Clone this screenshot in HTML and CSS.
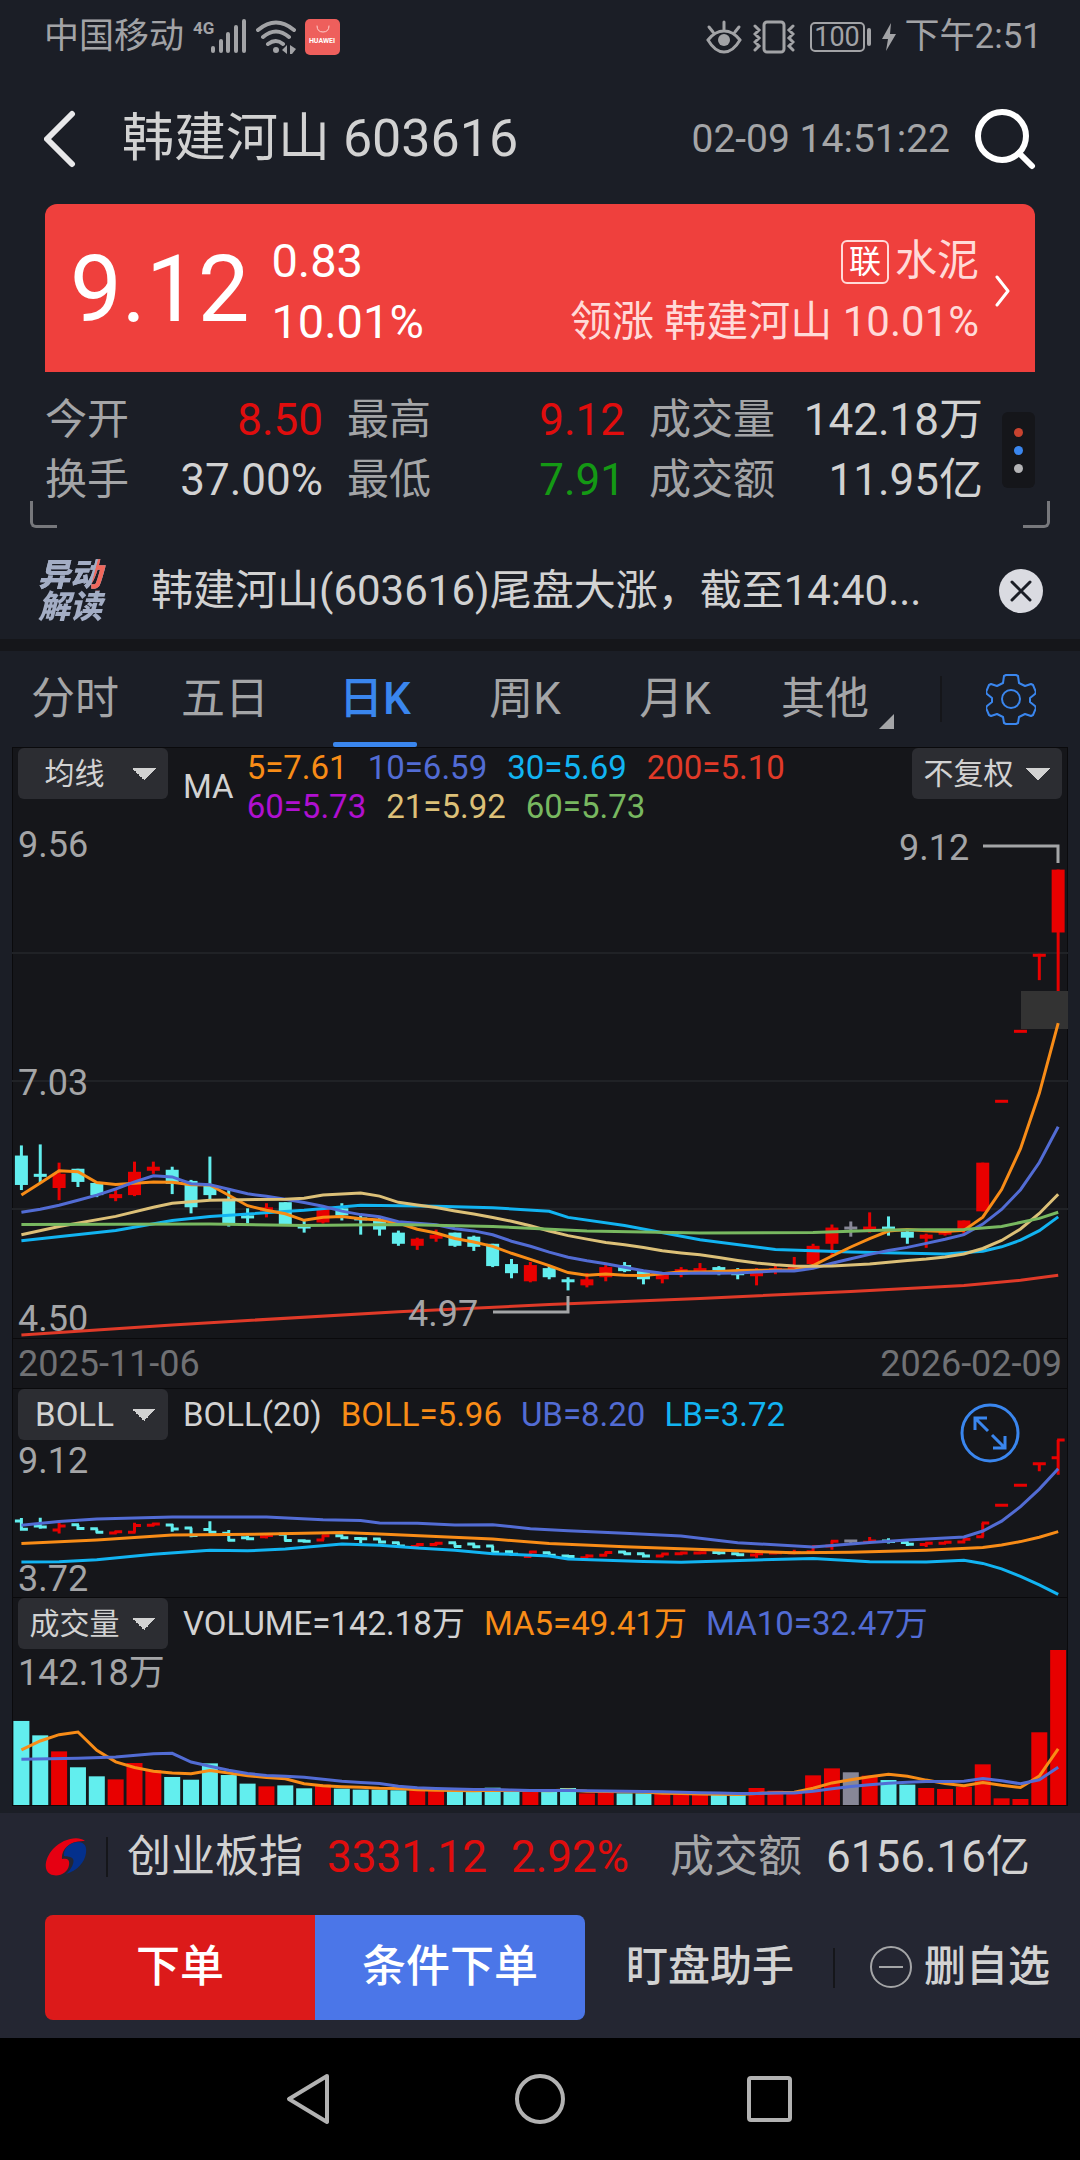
FILE: index.html
```html
<!DOCTYPE html>
<html lang="zh-CN">
<head>
    <meta charset="UTF-8">
    <meta name="viewport" content="width=device-width, initial-scale=1.0">
    <title>韩建河山 603616</title>
    <link rel="stylesheet" href="styles.css">
</head>
<body>
    <div class="status-bar">
        <span>中国移动</span>
        <svg class="signal" width="54" height="36" viewBox="0 0 54 36">
            <text class="network" x="0" y="15">4G</text>
            <path d="M20 29v3M28 22v10M35 15v17M43 8v24M51 2v30" />
        </svg>
        <svg class="wifi" width="40" height="36" viewBox="0 0 40 36">
            <path d="M2 11q18-15 36 0M7 18q13-11 26 0M12 25q8-6 15 0" />
            <circle cx="20" cy="31" r="3" />
            <path class="solid" d="M31 26v9l-5-4zM34 26l6 4-4 5h-2z" />
        </svg>
        <svg width="35" height="36" viewBox="0 0 35 36">
            <rect width="35" height="36" rx="5" fill="#ee5f5c" />
            <path class="handle" d="M12 7q0 6 6 6t6-6" />
            <text class="huawei" x="17" y="24">HUAWEI</text>
        </svg>
        <div class="status-right">
            <svg width="36" height="36" viewBox="0 0 36 36">
                <path d="M2 21q7-9 16-9t16 9q-7 12-16 12T2 21zM18 11V3M7 13L3 8M29 13l4-5" />
                <circle cx="18" cy="21" r="6" />
            </svg>
            <svg width="42" height="36" viewBox="0 0 42 36">
                <rect x="11" y="3" width="20" height="30" rx="3" />
                <path d="M2 7l4 4-4 4 4 4-4 4 4 4-4 4M40 7l-4 4 4 4-4 4 4 4-4 4 4 4" />
            </svg>
            <div class="battery">100</div>
            <svg width="14" height="28" viewBox="0 0 14 28"><path class="solid" d="M9 0L0 16h6L4 28l10-17H8z" /></svg>
            <span>下午2:51</span>
        </div>
    </div>

    <header class="title-bar">
        <button class="icon-button" aria-label="返回">
            <svg width="32" height="58" viewBox="0 0 32 58"><path d="M28 4L3 29l25 25" fill="none" stroke="#e8e8ea" stroke-width="6" stroke-linecap="round" stroke-linejoin="round" /></svg>
        </button>
        <h1>韩建河山 603616</h1>
        <time>02-09 14:51:22</time>
        <button class="icon-button" aria-label="搜索">
            <svg width="62" height="62" viewBox="0 0 62 62"><g fill="none" stroke="#fff" stroke-width="6" stroke-linecap="round"><circle cx="28" cy="28" r="24" /><path d="M45 45l13 13" /></g></svg>
        </button>
    </header>

    <a class="quote" href="#sector">
        <strong class="price">9.12</strong>
        <span class="change">0.83<br>10.01%</span>
        <span class="sector"><span class="sector-name"><b>联</b>水泥</span><br>领涨 韩建河山 10.01%</span>
        <svg width="16" height="32" viewBox="0 0 16 32"><path d="M2 2l11 14L2 30" fill="none" stroke="#fff" stroke-width="3" stroke-linecap="round" stroke-linejoin="round" /></svg>
    </a>

    <section class="stats">
        <dl>
            <div><dt>今开</dt><dd class="up">8.50</dd></div>
            <div><dt>最高</dt><dd class="up">9.12</dd></div>
            <div><dt>成交量</dt><dd>142.18万</dd></div>
            <div><dt>换手</dt><dd>37.00%</dd></div>
            <div><dt>最低</dt><dd class="down">7.91</dd></div>
            <div><dt>成交额</dt><dd>11.95亿</dd></div>
        </dl>
        <button class="more" aria-label="更多"><i></i><i></i><i></i></button>
    </section>

    <section class="news">
        <div class="news-logo">异动<br>解读</div>
        <a href="#news">韩建河山(603616)尾盘大涨，截至14:40...</a>
        <button class="icon-button" aria-label="关闭">
            <svg width="46" height="46" viewBox="0 0 46 46"><circle cx="23" cy="23" r="22" fill="#dadbe1" /><path d="M14 14l18 18M32 14L14 32" stroke="#1b1e26" stroke-width="3" stroke-linecap="round" /></svg>
        </button>
    </section>

    <nav class="tabs">
        <button>分时</button>
        <button>五日</button>
        <button class="active">日K</button>
        <button>周K</button>
        <button>月K</button>
        <button class="has-menu">其他</button>
        <button class="settings" aria-label="设置">
            <svg width="50" height="52" viewBox="0 0 50 52">
                <g fill="none" stroke="#3a86ee" stroke-width="2" stroke-linejoin="round">
                    <path d="M20 2h10l2 1 1 7 6 3 6-2 2 1 3 7-1 2-5 4v4l5 4 1 2-3 7-2 1-6-2-6 3-1 6-2 1H20l-2-1-1-6-6-3-6 2-2-1-3-7 1-2 5-4v-4l-5-4-1-2 3-7 2-1 6 2 6-3 1-7z" />
                    <circle cx="25" cy="26" r="9" />
                </g>
            </svg>
        </button>
    </nav>

    <main class="charts">
        <section class="panel">
            <div class="panel-head main-head">
                <select aria-label="主图指标"><option>均线</option></select>
                <span class="ma-title">MA</span>
                <div class="ma-values">
                    <span class="orange">5=7.61</span><span class="blue">10=6.59</span><span class="cyan">30=5.69</span><span class="red">200=5.10</span><br>
                    <span class="purple">60=5.73</span><span class="yellow">21=5.92</span><span class="green">60=5.73</span>
                </div>
                <select aria-label="复权"><option>不复权</option></select>
            </div>
            <svg id="kline" viewBox="0 0 1056 513"></svg>
        </section>
        <div class="dates"><time>2025-11-06</time><time>2026-02-09</time></div>
        <section class="panel">
            <div class="panel-head">
                <select class="latin" aria-label="副图一"><option>BOLL</option></select>
                <span>BOLL(20)</span><span class="orange">BOLL=5.96</span><span class="blue">UB=8.20</span><span class="cyan">LB=3.72</span>
            </div>
            <svg id="boll" viewBox="0 0 1056 157"></svg>
            <button class="expand" aria-label="全屏">
                <svg width="60" height="60" viewBox="0 0 60 60"><g fill="none" stroke="#3a86ee" stroke-width="3"><circle cx="30" cy="30" r="28" /><path d="M28 28L15 15M15 27V15h12M32 32l13 13M45 33v12H33" /></g></svg>
            </button>
        </section>
        <section class="panel">
            <div class="panel-head">
                <select aria-label="副图二"><option>成交量</option></select>
                <span>VOLUME=142.18万</span><span class="orange">MA5=49.41万</span><span class="blue">MA10=32.47万</span>
            </div>
            <svg id="volume" viewBox="0 0 1056 156"></svg>
        </section>
    </main>

    <footer>
        <div class="index-row">
            <svg width="42" height="44" viewBox="0 0 42 44">
                <path d="M40 6C33 0 17 4 8 14C0 23-2 35 5 39c8 4 18-1 19-9c1-6-2-7-7-6c-1-8 6-19 23-18z" fill="#e60012" />
                <path d="M19 21c-1-9 8-14 14-14c7 0 9 5 8 11c-1 9-9 18-20 21c5-4 9-12 7-15c-2-3-6-2-9-3z" fill="#04308c" />
            </svg>
            <i class="divider"></i>
            <span class="index-name">创业板指</span>
            <span class="up">3331.12</span>
            <span class="up">2.92%</span>
            <span class="turnover">成交额</span>
            <span>6156.16亿</span>
        </div>
        <div class="actions">
            <button class="order">下单</button>
            <button class="condition">条件下单</button>
            <button class="plain">盯盘助手</button>
            <i class="divider"></i>
            <button class="plain remove">
                <svg width="44" height="44" viewBox="0 0 44 44"><g fill="none" stroke="#a4a5a7" stroke-width="2"><circle cx="22" cy="22" r="20" /><path d="M10 22h24" /></g></svg>
                删自选
            </button>
        </div>
    </footer>

    <nav class="system-nav">
        <button class="icon-button" aria-label="后退"><svg width="52" height="52" viewBox="0 0 52 52"><path d="M42 3L4 26l38 23z" /></svg></button>
        <button class="icon-button" aria-label="主页"><svg width="52" height="52" viewBox="0 0 52 52"><circle cx="26" cy="26" r="23" /></svg></button>
        <button class="icon-button" aria-label="最近任务"><svg width="52" height="52" viewBox="0 0 52 52"><rect x="6" y="5" width="41" height="42" rx="2" /></svg></button>
    </nav>

    <script src="chart.js"></script>
</body>
</html>
```
FILE: styles.css
```css
* {
    box-sizing: border-box;
}

body {
    margin: 0;
    background-color: #1b1e26;
    color: #d2d2d2;
    font-family: Roboto, "Noto Sans CJK SC", sans-serif;
    line-height: 1.2;
}

svg {
    display: block;
    flex: none;
}

button,
select {
    border: none;
    padding: 0;
    background: none;
    color: inherit;
    font-family: inherit;
    line-height: inherit;
}

a {
    color: inherit;
    text-decoration: none;
}

.icon-button {
    flex: none;
}

/* phone status bar */
.status-bar {
    display: flex;
    align-items: center;
    height: 74px;
    padding: 0 38px 0 44px;
    color: #a2a3a6;
    font-size: 35px;
    gap: 9px;
}

.status-bar path,
.status-bar rect[x] {
    fill: none;
    stroke: #a2a3a6;
    stroke-width: 3;
    stroke-linecap: round;
}

.status-bar .signal path,
.status-bar .wifi path {
    stroke-width: 4;
}

.status-bar .handle {
    stroke: #ffd0cc;
    stroke-width: 1;
}

.status-bar circle,
.status-bar .network,
.status-bar path.solid {
    fill: #a2a3a6;
    stroke: none;
}

.network {
    font-size: 17px;
    font-weight: bold;
}

.huawei {
    fill: #fff;
    font-size: 7px;
    font-weight: bold;
    text-anchor: middle;
}

.status-right {
    display: flex;
    align-items: center;
    margin-left: auto;
    gap: 11px;
}

.status-right span {
    margin-left: -2px;
}

.battery {
    position: relative;
    width: 55px;
    height: 30px;
    margin: 0 6px 0 4px;
    border: 2px solid #a2a3a6;
    border-radius: 5px;
    font-size: 27px;
    line-height: 27px;
    text-align: center;
}

.battery::after {
    content: "";
    position: absolute;
    top: 4px;
    right: -8px;
    width: 4px;
    height: 18px;
    border-radius: 2px;
    background-color: #a2a3a6;
}

/* stock title */
.title-bar {
    display: flex;
    align-items: center;
    height: 130px;
    padding: 0 44px;
}

.title-bar h1 {
    flex: 1;
    margin: 0 0 0 46px;
    font-size: 52px;
    font-weight: normal;
}

.title-bar time {
    margin-right: 24px;
    color: #a4a5a7;
    font-size: 39px;
}

/* price banner */
.quote {
    display: flex;
    align-items: center;
    height: 168px;
    margin: 0 45px;
    padding: 5px 24px 0 25px;
    border-radius: 12px 12px 0 0;
    background-color: #ef403d;
    color: #fff;
}

.price {
    font-size: 92px;
    font-weight: normal;
}

.change {
    margin-left: 22px;
    font-size: 47px;
    line-height: 61px;
}

.sector {
    flex: 1;
    margin-right: 16px;
    color: #ffdad8;
    font-size: 42px;
    line-height: 61px;
    text-align: right;
}

.sector b {
    display: inline-block;
    width: 48px;
    margin-right: 6px;
    border: 2px solid #ffdad8;
    border-radius: 6px;
    color: #fff;
    font-size: 32px;
    font-weight: normal;
    line-height: 40px;
    text-align: center;
    vertical-align: 2px;
}

.up {
    color: #e00d0d;
}

.down {
    color: #149914;
}

.stats {
    position: relative;
    display: flex;
    align-items: center;
    padding: 18px 45px 28px;
    gap: 19px;
}

.stats dl {
    flex: 1;
    display: grid;
    grid-template-columns: 278fr 278fr 334fr;
    column-gap: 24px;
    margin: 0;
    font-size: 44px;
    line-height: 60px;
}

.stats dl div {
    display: flex;
    justify-content: space-between;
}

.stats dt {
    color: #a4a5a7;
    font-size: 42px;
}

.stats dd {
    margin: 0;
}

.stats::before,
.stats::after {
    content: "";
    position: absolute;
    bottom: 10px;
    width: 24px;
    height: 24px;
    border-bottom: 3px solid #77787c;
}

.stats::before {
    left: 30px;
    border-left: 3px solid #77787c;
    border-bottom-left-radius: 6px;
}

.stats::after {
    right: 30px;
    border-right: 3px solid #77787c;
    border-bottom-right-radius: 6px;
}

.more {
    display: flex;
    flex-direction: column;
    align-items: center;
    justify-content: center;
    width: 33px;
    height: 76px;
    border-radius: 6px;
    background-color: #15161a;
    gap: 9px;
}

.more i {
    width: 9px;
    height: 9px;
    border-radius: 50%;
    background-color: #b4b4b6;
}

.more i:nth-child(1) {
    background-color: #c8432f;
}

.more i:nth-child(2) {
    background-color: #3a86ee;
}

/* news strip */
.news {
    display: flex;
    align-items: center;
    height: 113px;
    padding: 5px 36px 0 38px;
    border-bottom: 12px solid #15161a;
}

.news-logo {
    width: 113px;
    background: linear-gradient(105deg, #a3adc4 76%, #f0685c 77%, #f0685c 88%, #a3adc4 89%) 0 0 / 70px 32px no-repeat, #a3adc4;
    background-clip: text;
    -webkit-background-clip: text;
    color: transparent;
    font-size: 32px;
    font-style: italic;
    font-weight: 900;
    line-height: 32px;
}

.news a {
    flex: 1;
    min-width: 0;
    overflow: hidden;
    font-size: 42px;
    white-space: nowrap;
}

.tabs {
    display: grid;
    grid-template-columns: repeat(6, 1fr) 180px;
    height: 96px;
}

.tabs button {
    position: relative;
    color: #a4a5a7;
    font-size: 44px;
}

.tabs .active {
    color: #3a86ee;
    font-weight: 500;
}

.tabs .active::after {
    content: "";
    position: absolute;
    bottom: 0;
    left: calc(50% - 42px);
    width: 84px;
    height: 5px;
    border-radius: 2px;
    background-color: #3a86ee;
}

.has-menu::after {
    content: "";
    position: absolute;
    right: 6px;
    bottom: 18px;
    border-bottom: 15px solid #a4a5a7;
    border-left: 15px solid transparent;
}

.tabs .settings {
    display: flex;
    align-items: center;
    padding-left: 86px;
}

.settings::before {
    content: "";
    position: absolute;
    left: 40px;
    width: 2px;
    height: 46px;
    background-color: #15161a;
}

/* charts */
.charts {
    margin: 0 12px 7px;
    border: solid #0a0a0c;
    border-width: 0 1px 1px;
    background-color: #15161a;
}

.panel {
    position: relative;
    border-top: 1px solid #0a0a0c;
}

.panel > svg {
    width: calc(100% + 2px);
    margin: 0 -1px;
    overflow: visible;
}

.panel-head {
    display: flex;
    align-items: center;
    height: 51px;
    padding: 0 5px;
    font-size: 33px;
    gap: 19px;
    white-space: nowrap;
}

.panel-head select {
    appearance: none;
    width: 150px;
    height: 51px;
    margin-right: -4px;
    padding-right: 37px;
    border-radius: 6px;
    background-color: #2c2d32;
    background-image: linear-gradient(to top right, transparent 50%, #d2d2d2 50%), linear-gradient(to top left, transparent 50%, #d2d2d2 50%);
    background-position: 114px 20px, 126px 20px;
    background-repeat: no-repeat;
    background-size: 12px 12px;
    font-size: 30px;
    text-align: center;
    text-align-last: center;
}

.panel-head .latin {
    font-size: 33px;
}

.main-head {
    align-items: flex-start;
    height: 77px;
    line-height: 39px;
}

.main-head select:last-child {
    margin: 0 0 0 auto;
}

.ma-title {
    padding-top: 19px;
}

.ma-values {
    margin-left: -6px;
}

.ma-values span {
    margin-right: 20px;
}

.orange {
    color: #f88c17;
}

.blue {
    color: #526cd4;
}

.cyan {
    color: #12b4f2;
}

.red {
    color: #e03a28;
}

.purple {
    color: #b010d0;
}

.yellow {
    color: #dcc078;
}

.green {
    color: #78b860;
}

.dates {
    display: flex;
    align-items: center;
    justify-content: space-between;
    height: 50px;
    padding: 2px 5px 0;
    border-top: 1px solid #0a0a0c;
    color: #707174;
    font-size: 36px;
}

.expand {
    position: absolute;
    top: 14px;
    right: 47px;
}

.panel text {
    fill: #a4a5a7;
    font-size: 36px;
}

.grid {
    stroke: #202226;
    stroke-width: 2;
}

.leader {
    fill: none;
    stroke: #a4a5a7;
    stroke-width: 3;
}

.line {
    fill: none;
    stroke-width: 3;
}

.rise {
    fill: #e80000;
    stroke: #e80000;
}

.fall {
    fill: #62eeee;
    stroke: #62eeee;
}

.flat {
    fill: #878797;
    stroke: #878797;
}

.panel rect {
    stroke: none;
}

.wick {
    fill: none;
    stroke-width: 3;
}

.marker {
    fill: #333;
}

/* bottom bar */
footer {
    padding: 0 30px 18px 45px;
    background-color: #242632;
}

.index-row {
    display: flex;
    align-items: center;
    height: 102px;
    padding-bottom: 14px;
    font-size: 44px;
    gap: 24px;
    white-space: nowrap;
}

.divider {
    flex: none;
    width: 2px;
    height: 40px;
    background-color: #15161a;
}

.index-row .divider {
    margin: 0 -5px;
}

.turnover {
    margin-left: 17px;
    color: #a4a5a7;
}

.actions {
    display: flex;
    align-items: center;
    height: 105px;
    font-size: 42px;
}

.actions button {
    font-size: inherit;
}

.actions .order,
.actions .condition {
    flex: 1;
    height: 100%;
    color: #fff;
    font-size: 44px;
    font-weight: 500;
}

.actions .order {
    border-radius: 8px 0 0 8px;
    background-color: #dc1a1a;
}

.actions .condition {
    border-radius: 0 8px 8px 0;
    background-color: #4b76e8;
}

.plain {
    margin: 0 39px 0 41px;
    font-weight: 500;
}

.actions .remove {
    display: flex;
    align-items: center;
    margin: 0 0 0 34px;
    gap: 11px;
}

.system-nav {
    display: flex;
    justify-content: center;
    align-items: center;
    height: 122px;
    background-color: #000;
    gap: 177px;
}

.system-nav svg * {
    fill: none;
    stroke: #b2b2b2;
    stroke-width: 4;
    stroke-linejoin: round;
}
```
FILE: chart.js
```js
// open, close, high, low
var candles = [
    [6.30, 6.01, 6.40, 5.96], [6.12, 6.09, 6.41, 6.03], [5.98, 6.12, 6.23, 5.86], [6.17, 6.04, 6.17, 5.99],
    [6.03, 5.91, 6.03, 5.89], [5.88, 5.92, 5.96, 5.85], [5.91, 6.14, 6.24, 5.90], [6.15, 6.19, 6.24, 6.12],
    [6.16, 6.02, 6.19, 5.92], [6.05, 5.79, 6.06, 5.73], [6.00, 5.91, 6.29, 5.87], [5.87, 5.63, 5.98, 5.60],
    [5.71, 5.68, 5.78, 5.63], [5.75, 5.79, 5.83, 5.69], [5.84, 5.62, 5.84, 5.61], [5.61, 5.59, 5.66, 5.54],
    [5.64, 5.78, 5.81, 5.63], [5.78, 5.71, 5.83, 5.66], [5.69, 5.68, 5.71, 5.52], [5.67, 5.57, 5.69, 5.51],
    [5.54, 5.43, 5.56, 5.41], [5.41, 5.48, 5.49, 5.37], [5.48, 5.52, 5.57, 5.45], [5.54, 5.41, 5.54, 5.40],
    [5.50, 5.40, 5.51, 5.36], [5.43, 5.21, 5.43, 5.20], [5.23, 5.14, 5.28, 5.09], [5.06, 5.22, 5.25, 5.05],
    [5.19, 5.10, 5.22, 5.08], [5.08, 5.06, 5.10, 4.97], [5.02, 5.08, 5.14, 5.00], [5.10, 5.20, 5.22, 5.06],
    [5.22, 5.16, 5.25, 5.15], [5.16, 5.08, 5.16, 5.03], [5.08, 5.15, 5.15, 5.04], [5.16, 5.18, 5.20, 5.10],
    [5.18, 5.19, 5.24, 5.17], [5.20, 5.19, 5.21, 5.12], [5.16, 5.12, 5.19, 5.08], [5.11, 5.16, 5.19, 5.02],
    [5.18, 5.19, 5.22, 5.13], [5.19, 5.20, 5.30, 5.17], [5.23, 5.41, 5.43, 5.18], [5.43, 5.59, 5.62, 5.30],
    [5.60, 5.60, 5.65, 5.50], [5.56, 5.60, 5.74, 5.54], [5.60, 5.58, 5.70, 5.51], [5.55, 5.49, 5.58, 5.43],
    [5.48, 5.52, 5.53, 5.39], [5.52, 5.56, 5.57, 5.51], [5.57, 5.66, 5.66, 5.52], [5.75, 6.23, 6.23, 5.75],
    [6.85, 6.85, 6.85, 6.85], [7.54, 7.54, 7.54, 7.54], [8.29, 8.29, 8.29, 8.03], [8.50, 9.12, 9.12, 7.91]
];

var volumes = [
    77.1, 63.9, 49.2, 34.6, 26.3, 23.5, 38.5, 32.1, 25.7, 23.2, 38.2, 27.5, 19.6, 17.1, 18, 15.3, 18.7, 15, 14.1,
    14.1, 13.5, 13.5, 12.8, 12.8, 12.5, 15.9, 13.1, 11.9, 12.2, 15.6, 10.7, 11.3, 10.7, 10.7, 10.1, 9.8, 9.5, 9.2,
    8.9, 15.6, 13.1, 11.9, 27.2, 33.6, 30, 26.9, 22.9, 18.7, 15.6, 14.7, 16.8, 37.3, 6.1, 5.5, 66.7, 142.18
];

function xAt(i) {
    return 9.4 + 18.85 * i;
}

function kY(p) {
    return (9.56 - p) * 101.4;
}

function bY(p) {
    return (9.12 - p) * 28.7;
}

function vY(v) {
    return 156 - v * 155 / 142.18;
}

function kind(i) {
    var c = candles[i];
    if (c[0] === c[1]) {
        return i > 0 && c[1] > candles[i - 1][1] + 0.1 ? "rise" : "flat";
    }
    return c[1] > c[0] ? "rise" : "fall";
}

// points: list of [index, value]
function line(points, y, color) {
    var pts = points.map(function (p) {
        return xAt(p[0]).toFixed(1) + "," + y(p[1]).toFixed(1);
    });
    return '<polyline class="line" style="stroke:' + color + '" points="' + pts.join(" ") + '"/>';
}

// moving average, first values come from days before the window
function average(values, n, head) {
    var points = head.slice();
    for (var i = n - 1; i < values.length; i++) {
        var sum = 0;
        for (var j = i - n + 1; j <= i; j++) {
            sum += values[j];
        }
        points.push([i, sum / n]);
    }
    return points;
}

function rect(cls, x, y, w, h) {
    return '<rect class="' + cls + '" x="' + x + '" y="' + y + '" width="' + w + '" height="' + h + '"/>';
}

function text(x, y, s) {
    return '<text x="' + x + '" y="' + y + '">' + s + '</text>';
}

var closes = candles.map(function (c) { return c[1]; });
var orange = "#f88c17", blue = "#526cd4", cyan = "#12b4f2";

// candlesticks
var k = '<path class="grid" d="M0 128H1056M0 256H1056M0 384H1056"/>';
k += text(6, 32, "9.56") + text(6, 270, "7.03") + text(6, 506, "4.50");
candles.forEach(function (c, i) {
    var top = kY(Math.max(c[0], c[1]));
    var h = Math.max(3, kY(Math.min(c[0], c[1])) - top);
    k += '<path class="wick ' + kind(i) + '" d="M' + xAt(i) + ' ' + kY(c[2]) + 'V' + kY(c[3]) + '"/>';
    k += rect(kind(i), xAt(i) - 6.5, top, 13, h);
});
k += rect("marker", 1009, 166, 47, 38);
k += line([[0, 5.46], [5, 5.56], [8, 5.66], [10, 5.70], [15, 5.76], [18, 5.81], [22, 5.80], [25, 5.785], [28, 5.75], [29, 5.69], [32, 5.61], [36, 5.47], [40, 5.375], [44, 5.35], [49, 5.33], [51, 5.356], [52, 5.40], [53, 5.465], [54, 5.56], [55, 5.695]], kY, cyan);
k += line([[0, 4.53], [8, 4.63], [20, 4.76], [28, 4.83], [36, 4.89], [44, 4.96], [50, 5.02], [53, 5.07], [55, 5.12]], kY, "#e03a28");
k += line(average(closes, 5, [[0, 5.91], [1, 6.03], [2, 6.15], [3, 6.14]]), kY, orange);
k += line(average(closes, 10, [[0, 5.74], [1, 5.77], [2, 5.81], [3, 5.86], [4, 5.91], [5, 5.97], [6, 6.04], [7, 6.10], [8, 6.09]]), kY, blue);
k += line(average(closes, 21, [[0, 5.52], [2, 5.60], [5, 5.70], [7, 5.79], [8, 5.83], [10, 5.86], [14, 5.87], [15, 5.88], [16, 5.91], [18, 5.93], [19, 5.90]]), kY, "#dcc078");
k += line([[0, 5.62], [10, 5.625], [15, 5.61], [20, 5.62], [25, 5.60], [30, 5.555], [36, 5.535], [42, 5.54], [46, 5.565], [50, 5.57], [52, 5.60], [54, 5.68], [55, 5.74]], kY, "#78b860");
k += '<path class="leader" d="M971 21H1046V38M481 487H556V471"/>';
k += text(887, 35, "9.12") + text(396, 501, "4.97");
document.getElementById("kline").innerHTML = k;

// bollinger bands
var b = text(6, 33, "9.12") + text(6, 151, "3.72");
candles.forEach(function (c, i) {
    var x = xAt(i);
    b += '<path class="wick ' + kind(i) + '" style="fill:none" d="M' + x + ' ' + bY(c[2]) + 'V' + bY(c[3]) +
        'M' + (x - 6.5) + ' ' + bY(c[0]) + 'H' + (x + 1) + 'M' + (x - 1) + ' ' + bY(c[1]) + 'H' + (x + 6.5) + '"/>';
});
b += line([[0, 5.51], [4, 5.64], [8, 5.81], [13, 5.84], [17, 5.90], [19, 5.84], [25, 5.67], [28, 5.51], [32, 5.40], [38, 5.26], [41, 5.19], [44, 5.21], [48, 5.28], [51, 5.37], [52, 5.46], [53, 5.58], [54, 5.73], [55, 5.93]], bY, orange);
b += line([[0, 6.15], [2, 6.28], [4, 6.37], [8, 6.44], [13, 6.44], [16, 6.34], [18, 6.31], [19, 6.23], [21, 6.22], [23, 6.16], [25, 6.17], [27, 6.03], [29, 5.96], [32, 5.87], [35, 5.77], [38, 5.54], [42, 5.39], [45, 5.55], [47, 5.64], [50, 5.74], [51, 5.95], [52, 6.29], [53, 6.80], [54, 7.41], [55, 8.12]], bY, blue);
b += line([[0, 4.87], [2, 4.88], [4, 4.95], [7, 5.14], [10, 5.28], [12, 5.26], [14, 5.32], [17, 5.50], [19, 5.45], [21, 5.36], [23, 5.28], [25, 5.16], [28, 5.08], [29, 4.97], [33, 4.89], [35, 4.86], [39, 4.94], [42, 4.99], [45, 4.88], [48, 4.87], [50, 4.93], [51, 4.82], [52, 4.63], [53, 4.37], [54, 4.07], [55, 3.74]], bY, cyan);
document.getElementById("boll").innerHTML = b;

// volume
var v = text(6, 36, "142.18万");
volumes.forEach(function (n, i) {
    v += rect(kind(i), xAt(i) - 8, vY(n), 16, 156 - vY(n));
});
v += line(average(volumes, 5, [[0, 50.5], [1, 58.7], [2, 64.5], [3, 67]]), vY, orange);
v += line(average(volumes, 10, [[0, 41.9], [3, 42.8], [5, 44], [7, 47.1], [8, 47.4]]), vY, blue);
document.getElementById("volume").innerHTML = v;
```
